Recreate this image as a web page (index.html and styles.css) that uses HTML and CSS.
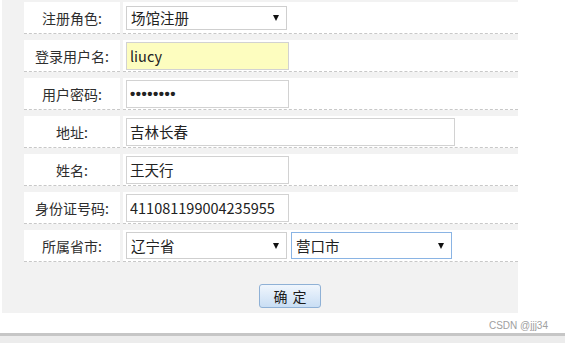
FILE: index.html
```html
<!DOCTYPE html>
<html lang="zh-CN">
<head>
  <meta charset="UTF-8">
  <title>用户注册</title>
  <link rel="stylesheet" href="styles.css">
</head>
<body>
<div class="panel">
  <div class="form">
    <div class="label">注册角色:</div>
    <div class="field">
      <div class="select small"><span>场馆注册</span><i class="arrow"></i></div>
    </div>

    <div class="label">登录用户名:</div>
    <div class="field"><input class="text filled" type="text" value="liucy"></div>

    <div class="label">用户密码:</div>
    <div class="field"><input class="text pwd" type="password" value="12345678"></div>

    <div class="label">地址:</div>
    <div class="field"><input class="text wide" type="text" value="吉林长春"></div>

    <div class="label">姓名:</div>
    <div class="field"><input class="text" type="text" value="王天行"></div>

    <div class="label">身份证号码:</div>
    <div class="field"><input class="text" type="text" value="411081199004235955"></div>

    <div class="label">所属省市:</div>
    <div class="field">
      <div class="select"><span>辽宁省</span><i class="arrow"></i></div>
      <div class="select focus"><span>营口市</span><i class="arrow"></i></div>
    </div>
  </div>

  <div class="actions">
    <button class="btn">确&nbsp;定</button>
  </div>
</div>

<div class="footer">CSDN @jjj34</div>
<div class="bar"></div>
<div class="bar-bottom"></div>
</body>
</html>
```

FILE: styles.css
```css
body {
  margin: 0;
  background: #fff;
  font-family: "Noto Sans CJK SC", "Noto Sans", sans-serif;
  color: #333;
  width: 565px;
  height: 343px;
  overflow: hidden;
}

.panel {
  margin-left: 2px;
  width: 516px;
  height: 311px;
  padding-top: 2px;
  background: #f2f2f2;
}

/* 表单: 左边标签, 右边输入框 */
.form {
  display: grid;
  grid-template-columns: 96px 395px;
  column-gap: 3px;
  row-gap: 6px;
  margin-left: 22px;
}

.label,
.field {
  height: 31px;
  background: #fff;
  border-bottom: 1px dashed #c8c8c8;
  display: flex;
  align-items: center;
}

.label {
  justify-content: center;
  font-size: 14px;
  color: #2e2e2e;
}

.field {
  padding-left: 3px;
  gap: 4px;
}

.text {
  box-sizing: border-box;
  width: 163px;
  height: 28px;
  margin: 0;
  padding: 0 3px;
  border: 1px solid #d2d2d2;
  background: #fff;
  font-family: "Noto Sans CJK SC", "Noto Sans", sans-serif;
  font-size: 14.5px;
  color: #222;
  outline: none;
}

.text.filled {
  background: #fdfdbf;
}

.text.pwd {
  font-family: "Liberation Sans", sans-serif;
  font-size: 15px;
  font-weight: bold;
  letter-spacing: 0.5px;
}

.text.wide {
  width: 329px;
}

.select {
  box-sizing: border-box;
  width: 161px;
  height: 27px;
  padding: 0 7px 0 4px;
  border: 1px solid #cfcfcf;
  background: #fff;
  display: flex;
  align-items: center;
  justify-content: space-between;
  font-size: 14.5px;
  color: #222;
}

.select.small {
  height: 24px;
}

.select.focus {
  border-color: #8ab4e4;
}

.arrow {
  width: 0;
  height: 0;
  border-left: 3px solid transparent;
  border-right: 3px solid transparent;
  border-top: 6px solid #111;
}

.actions {
  padding-left: 257px;
  margin-top: 21px;
}

.btn {
  width: 62px;
  height: 24px;
  padding: 0;
  border: 1px solid #8fb1d6;
  border-radius: 3px;
  background: linear-gradient(#f0f6fd, #c9def4);
  font-family: "Noto Sans CJK SC", "Noto Sans", sans-serif;
  font-size: 14px;
  color: #1b1b1b;
  word-spacing: 2px;
  cursor: pointer;
}

.footer {
  height: 20px;
  padding-right: 17px;
  text-align: right;
  font-family: "Liberation Sans", sans-serif;
  font-size: 10px;
  line-height: 26px;
  color: #a0a0a0;
}

.bar {
  height: 3px;
  background: #c6c6c6;
}

.bar-bottom {
  height: 7px;
  background: #ececec;
}
```
